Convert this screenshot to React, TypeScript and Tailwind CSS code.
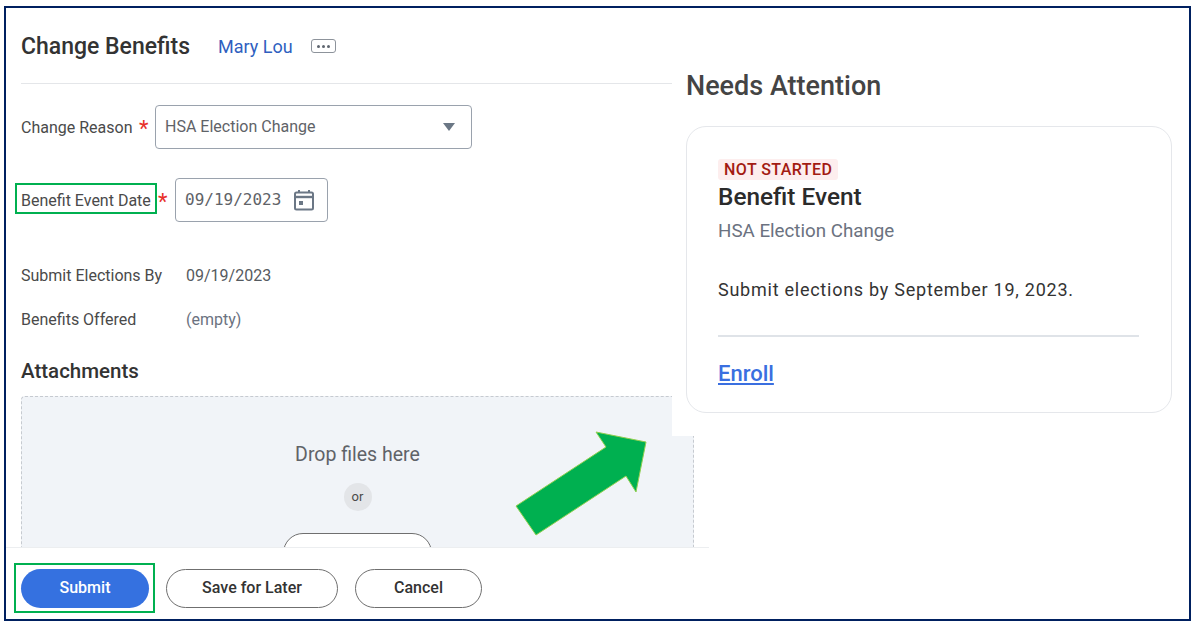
import { useState } from "react";

const CalendarIcon = () => (
  <svg width="24" height="24" viewBox="0 0 24 24" fill="none">
    <path d="M7 2v3M17 2v3" stroke="#6b7785" strokeWidth="2" />
    <rect x="3" y="4.5" width="18" height="17" rx="1.5" stroke="#6b7785" strokeWidth="2" />
    <path d="M3 9h18" stroke="#6b7785" strokeWidth="2.4" />
    <rect x="7" y="13" width="4" height="4" fill="#6b7785" />
  </svg>
);

const Star = () => <span className="text-[22px] leading-none text-[#e8302a]">*</span>;

export default function App() {
  const [reason] = useState("HSA Election Change");

  return (
    <div className="relative h-[628px] w-[1197px] overflow-hidden bg-white pl-[4px] pr-[6px] pt-[6px] pb-[7px] font-['Roboto',sans-serif]">
      {/* outer frame */}
      <div className="relative flex h-full flex-col overflow-hidden border-2 border-[#002060]">
        {/* left form */}
        <div className="min-h-0 flex-1 overflow-hidden pl-[15px]">
          <div className="w-[673px]">
            <div className="flex h-[76px] w-[651px] items-center border-b border-[#e4e6e9] pt-[1px]">
              <h1 className="pt-[2px] text-[23px] font-medium text-[#333333]">Change Benefits</h1>
              <a className="ml-[28px] text-[18px] text-[#2f5fbf]">Mary Lou</a>
              <div className="ml-[18px] flex h-[14px] w-[25px] items-center justify-center gap-[2px] rounded-[3px] border border-[#8d939b]">
                <span className="h-[3px] w-[3px] rounded-full bg-[#5f6670]" />
                <span className="h-[3px] w-[3px] rounded-full bg-[#5f6670]" />
                <span className="h-[3px] w-[3px] rounded-full bg-[#5f6670]" />
              </div>
            </div>

            <div className="mt-[21px] flex items-center">
              <span className="w-[111px] pt-[2px] text-[16px] whitespace-nowrap text-[#4a4a4a] [font-weight:450]">Change Reason</span>
              <span className="ml-[7px] w-[16px] pt-[6px]"><Star /></span>
              <div className="flex h-[44px] w-[317px] items-center justify-between rounded-[4px] border border-[#9aa2ad] pl-[9px] pr-[16px] text-[16px] text-[#5f6368]">
                {reason}
                <span className="h-0 w-0 border-x-[6px] border-t-[8px] border-x-transparent border-t-[#6b7785]" />
              </div>
            </div>

            <div className="mt-[29px] flex items-center">
              <div className="relative w-[131px] pt-[2px] text-[16px] whitespace-nowrap text-[#4a4a4a] [font-weight:450]">
                Benefit Event Date
                <span className="absolute -left-[6px] -top-[4px] h-[31px] w-[142px] border-2 border-[#00b050]" />
              </div>
              <span className="ml-[6px] w-[17px] pt-[6px]"><Star /></span>
              <div className="flex h-[44px] w-[153px] items-center justify-between rounded-[4px] border border-[#9aa2ad] pl-[9px] pr-[11px] font-['DejaVu_Sans_Mono',monospace] text-[16px] text-[#5f6368]">
                09/19/2023
                <CalendarIcon />
              </div>
            </div>

            <div className="mt-[44px] flex h-[20px] items-center text-[16px] text-[#4a4a4a]">
              <span className="w-[165px] [font-weight:450]">Submit Elections By</span>
              <span className="text-[#555a60]">09/19/2023</span>
            </div>
            <div className="mt-[24px] flex h-[20px] items-center text-[16px] text-[#4a4a4a]">
              <span className="w-[165px] [font-weight:450]">Benefits Offered</span>
              <span className="text-[#6b7280]">(empty)</span>
            </div>

            <h2 className="mt-[27px] text-[20.5px] leading-[28px] font-medium text-[#333333]">Attachments</h2>

            <div className="mt-[11px] flex h-[200px] flex-col items-center rounded-t-[4px] border border-dashed border-[#c6cad0] bg-[#f1f4f8] pt-[45px]">
              <p className="text-[19.5px] leading-[26px] text-[#5f6368]">Drop files here</p>
              <span className="mt-[15px] flex h-[28px] w-[28px] items-center justify-center rounded-full bg-[#e3e5e8] text-[13px] text-[#4a4a4a]">or</span>
              <div className="mt-[22px] h-[40px] w-[149px] shrink-0 rounded-full border border-[#6f6f6f] bg-white" />
            </div>
          </div>
        </div>

        {/* bottom bar */}
        <div className="relative flex h-[72px] w-[703px] shrink-0 items-center gap-[17px] border-t border-[#eceef0] bg-white pt-[9px] pl-[15px]">
          <button className="relative h-[39px] w-[128px] rounded-full bg-[#3571e0] text-[16px] font-medium text-white">
            Submit
            <span className="absolute -left-[7px] -top-[6px] h-[50px] w-[141px] border-2 border-[#00b050]" />
          </button>
          <button className="h-[39px] w-[172px] rounded-full border border-[#6f6f6f] text-[16px] font-medium text-[#333333]">Save for Later</button>
          <button className="h-[39px] w-[127px] rounded-full border border-[#6f6f6f] text-[16px] font-medium text-[#333333]">Cancel</button>
        </div>

        {/* pasted panel, sits on top of the form */}
        <div className="absolute left-[666px] right-0 top-[60px] h-[368px] bg-white pl-[14px]">
          <h2 className="mt-[2px] text-[27px] leading-[32px] font-medium text-[#444444]">Needs Attention</h2>
          <div className="mt-[24px] h-[287px] w-[486px] rounded-[20px] border border-[#e5e7eb] pl-[31px] pt-[32px]">
            <span className="block w-fit rounded-[3px] bg-[#fdeeee] px-[6px] text-[16px] leading-[21px] font-medium tracking-[0.45px] text-[#a31b12]">NOT STARTED</span>
            <h3 className="mt-[1px] text-[24.4px] leading-[32px] font-medium text-[#2b2b2b]">Benefit Event</h3>
            <p className="mt-[6px] text-[18.75px] leading-[24px] text-[#6b7280]">HSA Election Change</p>
            <p className="mt-[35px] text-[18px] leading-[24px] tracking-[0.75px] text-[#333333]">Submit elections by September 19, 2023.</p>
            <div className="mt-[33px] h-[2px] w-[421px] bg-[#dfe3e8]" />
            <a className="mt-[22px] block text-[22px] leading-[30px] font-medium text-[#3a6fe0] underline">Enroll</a>
          </div>
        </div>

        {/* callout arrow */}
        <svg className="absolute left-[504px] top-[422px]" width="140" height="115" viewBox="0 0 140 115">
          <polygon points="6,76 26,105 116,46 126,62 136,12 86,2 96,17" fill="#00b050" stroke="#92d050" strokeWidth="1" />
        </svg>
      </div>
    </div>
  );
}
